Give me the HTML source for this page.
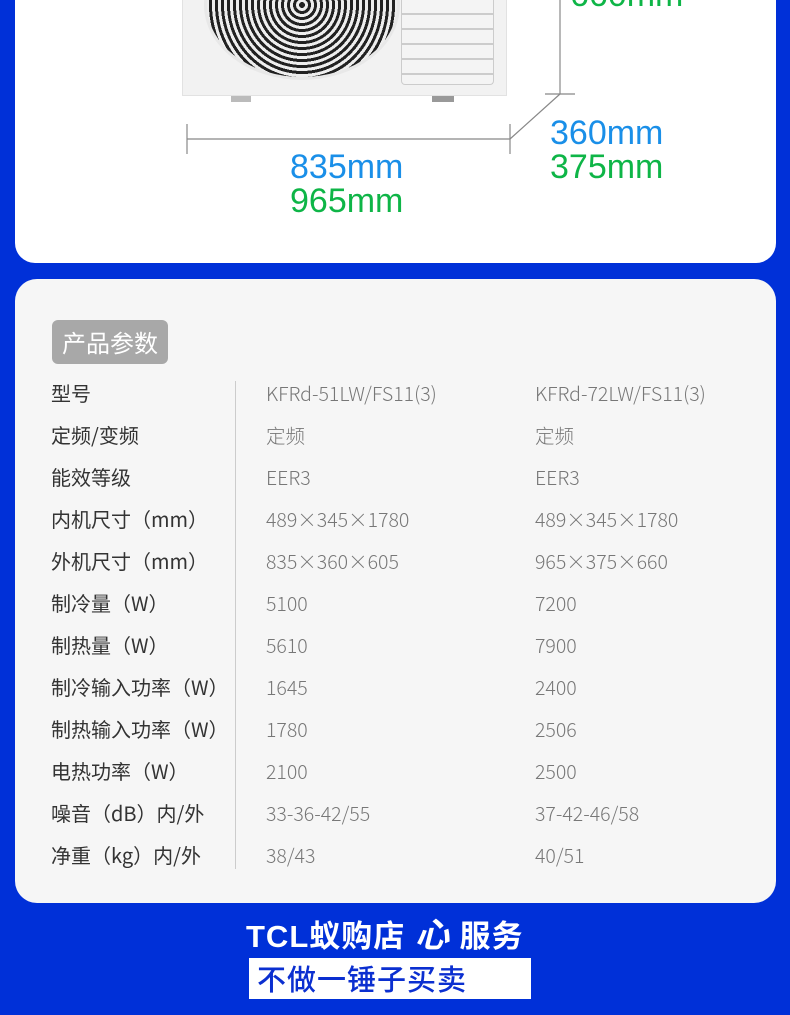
<!DOCTYPE html>
<html><head><meta charset="utf-8"><style>
*{margin:0;padding:0;box-sizing:border-box}
body{width:790px;height:1015px;background:#0030d8;position:relative;overflow:hidden;font-family:"Liberation Sans","Noto Sans CJK SC",sans-serif}
.card1{position:absolute;left:15px;top:-30px;width:761px;height:293px;background:#fff;border-radius:20px}
.card2{position:absolute;left:15px;top:279px;width:761px;height:624px;background:#f6f6f6;border-radius:22px}
.abs{position:absolute}
.tag{position:absolute;left:52px;top:320px;width:116px;height:44px;background:#a8a8a8;border-radius:6px;color:#fff;font-size:24px;line-height:44px;text-align:center;font-family:"Noto Sans CJK SC",sans-serif}
.row{position:absolute;left:0;width:790px;height:42px;font-size:19.5px;line-height:24px;font-family:"Noto Sans CJK SC",sans-serif}
.row span{position:absolute;top:0}
.l{left:51px;color:#333;font-size:20px}
.c{left:266px;color:#777;font-weight:300}
.d{left:535px;color:#777;font-weight:300}
.blue{color:#1a8fe8}.green{color:#0eb547}
.dim{font-size:34px;line-height:34px;position:absolute}
</style></head><body>
<div class="card1"></div>
<div class="abs" style="left:182px;top:0;width:325px;height:96px;background:#f2f2f2;border:1px solid #e2e2e2;border-top:none"></div>
<div class="abs" style="left:204px;top:-70px;width:196px;height:150px;border-radius:50%;background:repeating-radial-gradient(circle,#222 0 3px,#eee 3px 6px);border:3px solid #e8e8e8"></div>
<div class="abs" style="left:401px;top:0;width:93px;height:85px;background:repeating-linear-gradient(#f4f4f4 0 13px,#ccc 13px 15px);border:1px solid #ccc;border-top:none;border-radius:0 0 4px 4px"></div>
<div class="abs" style="left:231px;top:96px;width:20px;height:6px;background:#bbb"></div>
<div class="abs" style="left:432px;top:96px;width:22px;height:6px;background:#999"></div>
<svg class="abs" style="left:0;top:0" width="790" height="200">
<g stroke="#888" stroke-width="1.2" fill="none">
<line x1="187" y1="139" x2="510" y2="139"/><line x1="187" y1="124" x2="187" y2="154"/><line x1="510" y1="124" x2="510" y2="154"/>
<line x1="510" y1="139" x2="560" y2="94"/><line x1="560" y1="0" x2="560" y2="94"/><line x1="545" y1="94" x2="575" y2="94"/>
</g></svg>
<div class="dim green" style="left:570px;top:-22px">660mm</div>
<div class="dim blue" style="left:290px;top:150px">835mm</div>
<div class="dim green" style="left:290px;top:184px">965mm</div>
<div class="dim blue" style="left:550px;top:116px">360mm</div>
<div class="dim green" style="left:550px;top:150px">375mm</div>

<div class="card2"></div>
<div class="tag">产品参数</div>
<div class="abs" style="left:235px;top:381px;width:1px;height:488px;background:#ccc"></div>
<div class="row" style="top:381px"><span class="l">型号</span><span class="c">KFRd-51LW/FS11(3)</span><span class="d">KFRd-72LW/FS11(3)</span></div>
<div class="row" style="top:423px"><span class="l">定频/变频</span><span class="c">定频</span><span class="d">定频</span></div>
<div class="row" style="top:465px"><span class="l">能效等级</span><span class="c">EER3</span><span class="d">EER3</span></div>
<div class="row" style="top:507px"><span class="l">内机尺寸（mm）</span><span class="c">489×345×1780</span><span class="d">489×345×1780</span></div>
<div class="row" style="top:549px"><span class="l">外机尺寸（mm）</span><span class="c">835×360×605</span><span class="d">965×375×660</span></div>
<div class="row" style="top:591px"><span class="l">制冷量（W）</span><span class="c">5100</span><span class="d">7200</span></div>
<div class="row" style="top:633px"><span class="l">制热量（W）</span><span class="c">5610</span><span class="d">7900</span></div>
<div class="row" style="top:675px"><span class="l">制冷输入功率（W）</span><span class="c">1645</span><span class="d">2400</span></div>
<div class="row" style="top:717px"><span class="l">制热输入功率（W）</span><span class="c">1780</span><span class="d">2506</span></div>
<div class="row" style="top:759px"><span class="l">电热功率（W）</span><span class="c">2100</span><span class="d">2500</span></div>
<div class="row" style="top:801px"><span class="l">噪音（dB）内/外</span><span class="c">33-36-42/55</span><span class="d">37-42-46/58</span></div>
<div class="row" style="top:843px"><span class="l">净重（kg）内/外</span><span class="c">38/43</span><span class="d">40/51</span></div>

<div class="abs" style="left:246px;top:917px;color:#fff;font-size:31px;font-weight:bold;line-height:38px;letter-spacing:1px;font-family:'Liberation Sans','Noto Sans CJK SC',sans-serif;white-space:nowrap">TCL蚁购店 <span style="font-style:italic;font-size:34px">心</span> 服务</div>
<div class="abs" style="left:249px;top:958px;width:282px;height:41px;background:#fff;color:#0b2fd0;font-size:29px;line-height:40px;padding-left:8px;letter-spacing:1px;font-family:'Noto Sans CJK SC',sans-serif;font-weight:500">不做一锤子买卖</div>
</body></html>
